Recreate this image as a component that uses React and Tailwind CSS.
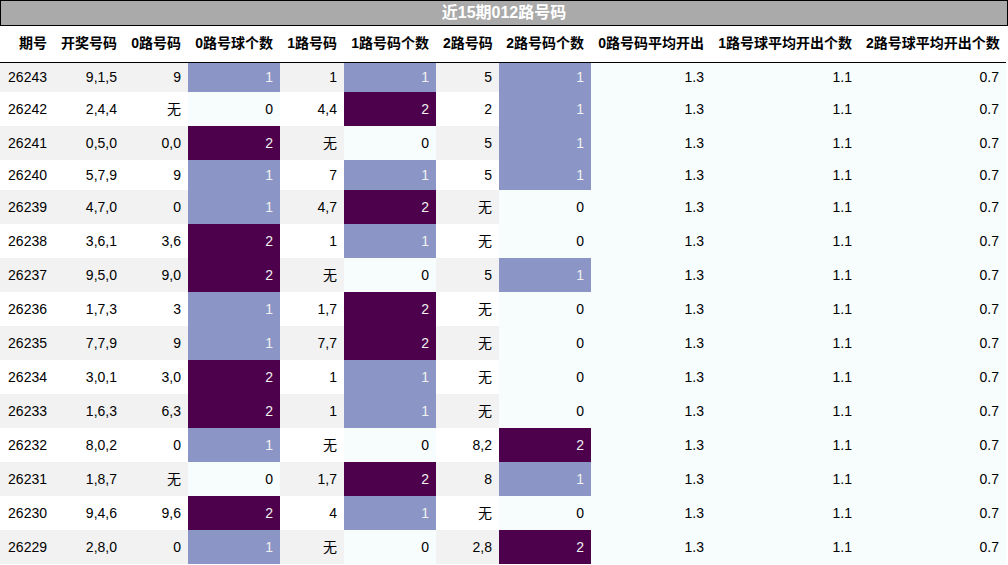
const rows = [
  ["26243", "9,1,5", "9", 1, "1", 1, "5", 1],
  ["26242", "2,4,4", "无", 0, "4,4", 2, "2", 1],
  ["26241", "0,5,0", "0,0", 2, "无", 0, "5", 1],
  ["26240", "5,7,9", "9", 1, "7", 1, "5", 1],
  ["26239", "4,7,0", "0", 1, "4,7", 2, "无", 0],
  ["26238", "3,6,1", "3,6", 2, "1", 1, "无", 0],
  ["26237", "9,5,0", "9,0", 2, "无", 0, "5", 1],
  ["26236", "1,7,3", "3", 1, "1,7", 2, "无", 0],
  ["26235", "7,7,9", "9", 1, "7,7", 2, "无", 0],
  ["26234", "3,0,1", "3,0", 2, "1", 1, "无", 0],
  ["26233", "1,6,3", "6,3", 2, "1", 1, "无", 0],
  ["26232", "8,0,2", "0", 1, "无", 0, "8,2", 2],
  ["26231", "1,8,7", "无", 0, "1,7", 2, "8", 1],
  ["26230", "9,4,6", "9,6", 2, "4", 1, "无", 0],
  ["26229", "2,8,0", "0", 1, "无", 0, "2,8", 2],
];

const headers = [
  "期号",
  "开奖号码",
  "0路号码",
  "0路号球个数",
  "1路号码",
  "1路号码个数",
  "2路号码",
  "2路号码个数",
  "0路号码平均开出",
  "1路号球平均开出个数",
  "2路号球平均开出个数",
];

const widths = [
  "w-[54px]",
  "w-[70px]",
  "w-[64px]",
  "w-[92px]",
  "w-[64px]",
  "w-[92px]",
  "w-[63px]",
  "w-[92px]",
  "w-[120px]",
  "w-[148px]",
  "w-[147px]",
];

// BuPu gradient: 0 -> lightest, 1 -> mid, 2 -> darkest
function CountCell({ n }) {
  const cls =
    n === 2
      ? "bg-[#4d004b] text-[#f1f1f1]"
      : n === 1
      ? "bg-[#8c96c6] text-[#f1f1f1]"
      : "bg-[#f7fcfd] text-black";
  return <td className={`px-[7px] text-right ${cls}`}>{n}</td>;
}

function Plain({ children }) {
  return <td className="px-[7px] text-right text-black">{children}</td>;
}

function Avg({ children }) {
  return <td className="px-[7px] text-right bg-[#f7fcfd] text-black">{children}</td>;
}

export default function App() {
  return (
    <div className="w-[1008px] h-[565px] overflow-hidden bg-white font-['Liberation_Sans','Noto_Sans_CJK_SC',sans-serif] text-[14px]">
      <div className="w-[1008px] h-[26px] border border-black bg-[#aaaaaa] text-white text-[16px] font-bold text-center leading-[24px]">
        近15期012路号码
      </div>
      <table className="table-fixed border-collapse w-[1006px]">
        <colgroup>
          {widths.map((w, i) => (
            <col key={i} className={w} />
          ))}
        </colgroup>
        <thead>
          <tr className="h-[36px] border-b border-black">
            {headers.map((h) => (
              <th key={h} className="px-[7px] text-right font-bold text-black whitespace-nowrap">
                {h}
              </th>
            ))}
          </tr>
        </thead>
        <tbody>
          {rows.map((r, i) => {
            const tall = r.includes("无");
            return (
              <tr
                key={r[0]}
                className={`${tall ? "h-[34px]" : "h-[30px]"} ${i % 2 === 0 ? "bg-[#f2f2f2]" : "bg-white"}`}
              >
                <Plain>{r[0]}</Plain>
                <Plain>{r[1]}</Plain>
                <Plain>{r[2]}</Plain>
                <CountCell n={r[3]} />
                <Plain>{r[4]}</Plain>
                <CountCell n={r[5]} />
                <Plain>{r[6]}</Plain>
                <CountCell n={r[7]} />
                <Avg>1.3</Avg>
                <Avg>1.1</Avg>
                <Avg>0.7</Avg>
              </tr>
            );
          })}
        </tbody>
      </table>
    </div>
  );
}
